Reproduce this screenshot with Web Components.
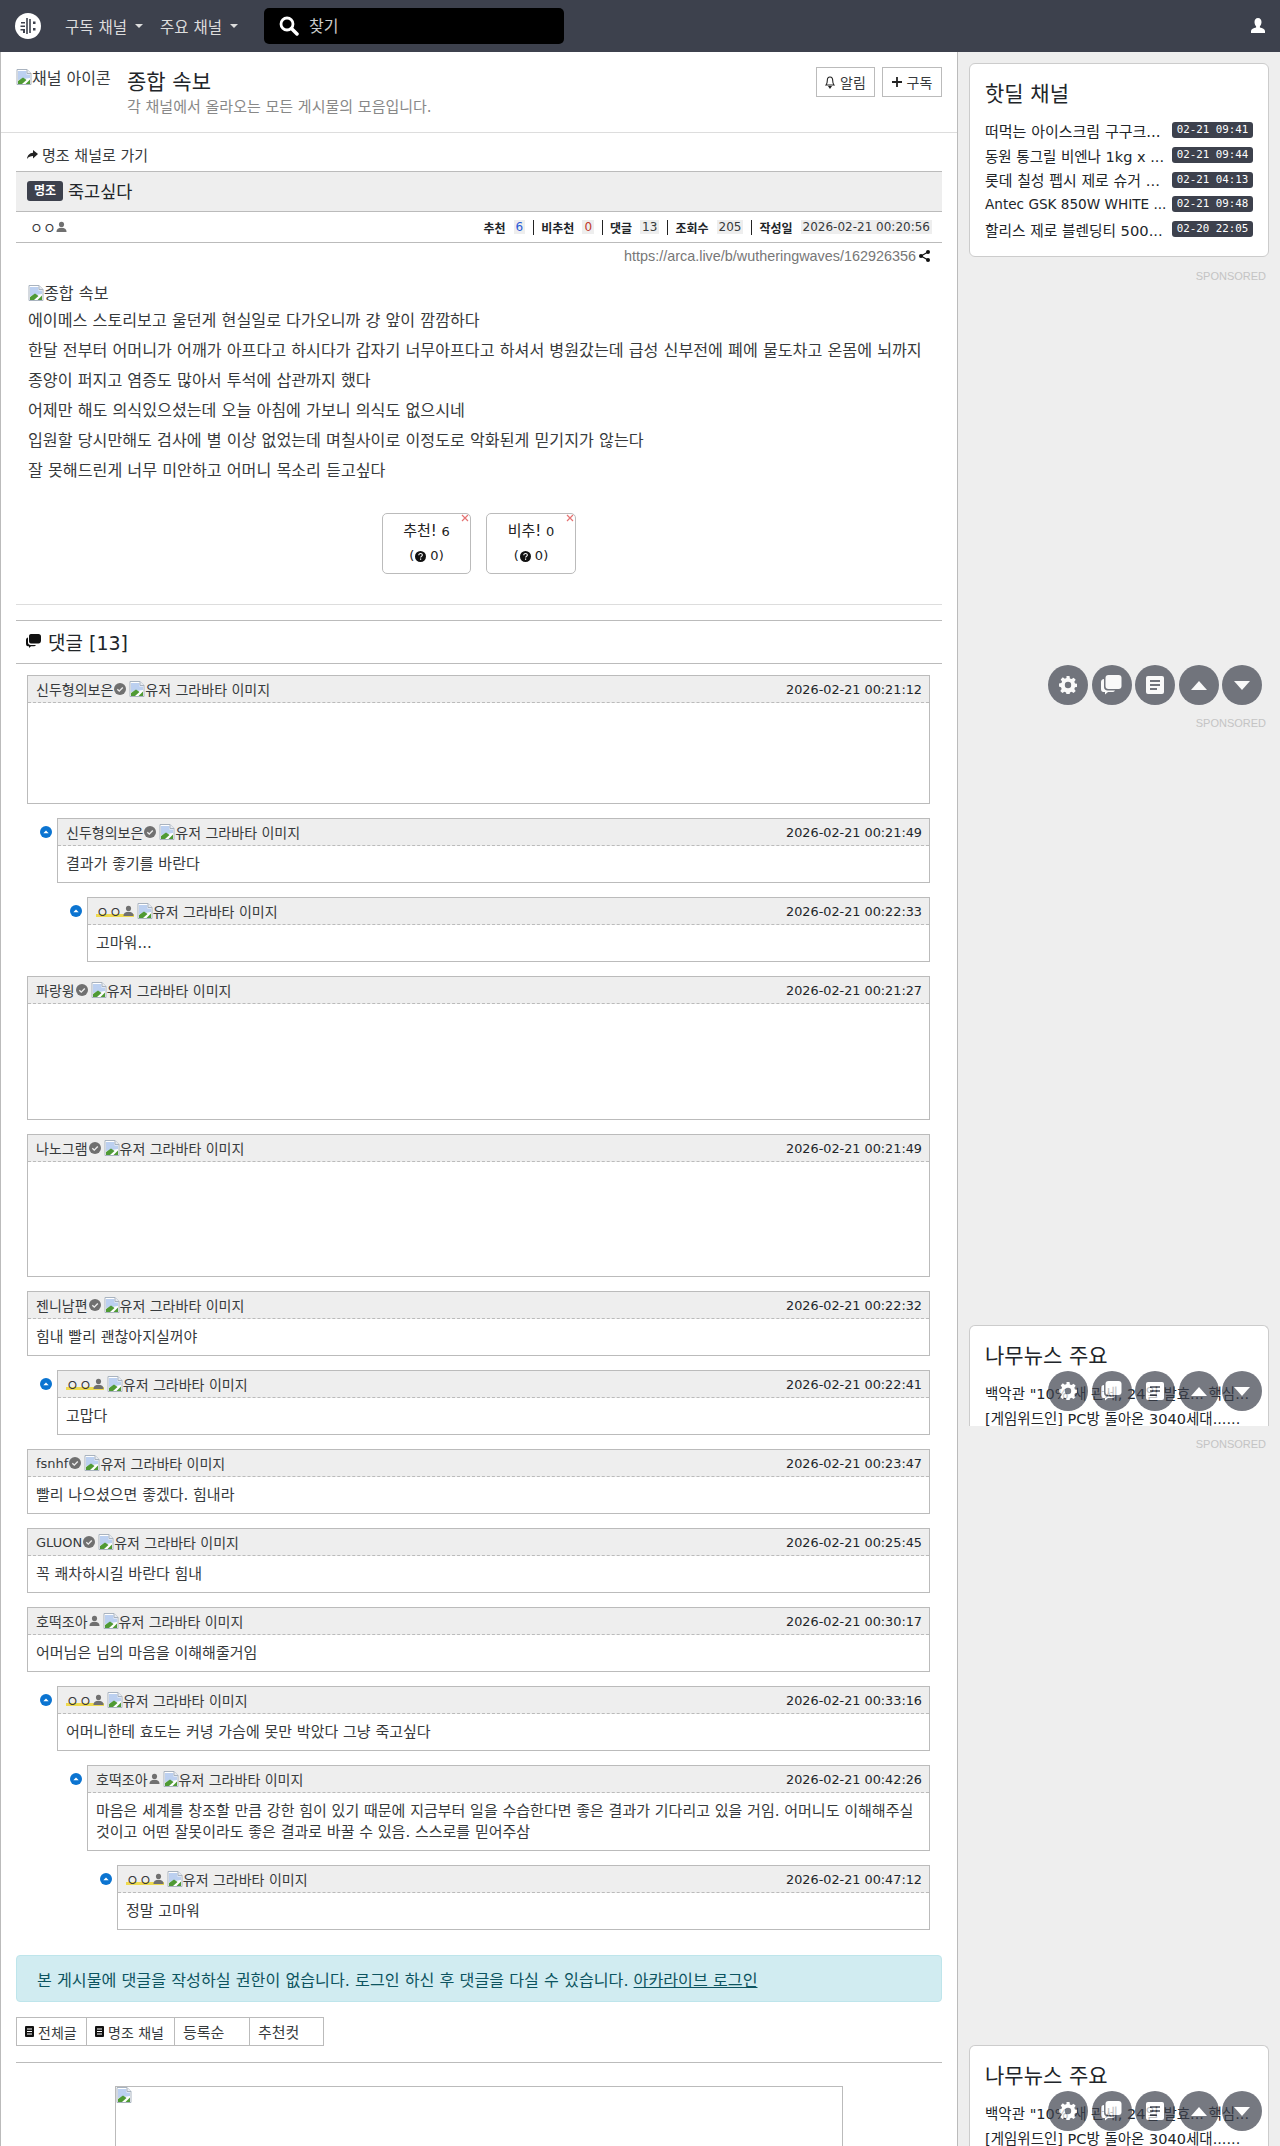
<!DOCTYPE html>
<html lang="ko">
<head>
<meta charset="utf-8">
<title>죽고싶다</title>
<style>
html,body{margin:0;padding:0;background:#eee}
body{font-family:"DejaVu Sans","Noto Sans CJK KR",sans-serif;font-size:14px;color:#373a3c;height:2146px;overflow:hidden}
</style>
</head>
<body>
<arca-navbar></arca-navbar>
<arca-layout>
  <arca-channel-head></arca-channel-head>
  <arca-article></arca-article>
  <arca-comments>
    <arca-comment user="신두형의보은" mark="check" time="2026-02-21 00:21:12" tall="100"></arca-comment>
    <arca-comment user="신두형의보은" mark="check" time="2026-02-21 00:21:49" depth="1">결과가 좋기를 바란다</arca-comment>
    <arca-comment user="ㅇㅇ" mark="user" op time="2026-02-21 00:22:33" depth="2">고마워...</arca-comment>
    <arca-comment user="파랑윙" mark="check" time="2026-02-21 00:21:27" tall="115"></arca-comment>
    <arca-comment user="나노그램" mark="check" time="2026-02-21 00:21:49" tall="114"></arca-comment>
    <arca-comment user="젠니남편" mark="check" time="2026-02-21 00:22:32">힘내 빨리 괜찮아지실꺼야</arca-comment>
    <arca-comment user="ㅇㅇ" mark="user" op time="2026-02-21 00:22:41" depth="1">고맙다</arca-comment>
    <arca-comment user="fsnhf" latin mark="check" time="2026-02-21 00:23:47">빨리 나으셨으면 좋겠다. 힘내라</arca-comment>
    <arca-comment user="GLUON" latin mark="check" time="2026-02-21 00:25:45">꼭 쾌차하시길 바란다 힘내</arca-comment>
    <arca-comment user="호떡조아" mark="user" time="2026-02-21 00:30:17">어머님은 님의 마음을 이해해줄거임</arca-comment>
    <arca-comment user="ㅇㅇ" mark="user" op time="2026-02-21 00:33:16" depth="1">어머니한테 효도는 커녕 가슴에 못만 박았다 그냥 죽고싶다</arca-comment>
    <arca-comment user="호떡조아" mark="user" time="2026-02-21 00:42:26" depth="2">마음은 세계를 창조할 만큼 강한 힘이 있기 때문에 지금부터 일을 수습한다면 좋은 결과가 기다리고 있을 거임. 어머니도 이해해주실 것이고 어떤 잘못이라도 좋은 결과로 바꿀 수 있음. 스스로를 믿어주삼</arca-comment>
    <arca-comment user="ㅇㅇ" mark="user" op time="2026-02-21 00:47:12" depth="3">정말 고마워</arca-comment>
  </arca-comments>
  <arca-footer-bar></arca-footer-bar>
  <arca-sidebar slot="side"></arca-sidebar>
</arca-layout>

<script>
const ICON = {
  broken: `<svg class="broken" width="16" height="16" viewBox="0 0 16 16"><path d="M1 .5h10l4 4v11H1z" fill="#fff" stroke="#a9b3bf"/><path d="M2 2h8.500v3.500H14V9L2 11z" fill="#bcd0f0"/><path d="M11 .5v4h4" fill="#e8ecf1" stroke="#a9b3bf"/><path d="M2 15v-3l5-3.500 3.500 2.500-4.500 4z" fill="#4f9a34"/><path d="M9.500 15l4.500-4.500V15z" fill="#4f9a34"/></svg>`,
  user: `<svg class="mk" width="11" height="12" viewBox="0 0 12 12"><circle cx="6" cy="3.200" r="2.800" fill="#707070"/><path d="M.5 11.500c0-3.200 2.200-4.600 5.500-4.600s5.500 1.400 5.500 4.600z" fill="#707070"/></svg>`,
  check: `<svg class="mk" width="12" height="12" viewBox="0 0 13 13"><circle cx="6.500" cy="6.500" r="6.500" fill="#707070"/><path d="M3.600 6.700l2.100 2.100 3.800-4" fill="none" stroke="#eee" stroke-width="1.500"/></svg>`
}

// navbar
class ArcaNavbar extends HTMLElement{
  constructor(){
    super()
    this.attachShadow({mode:'open'}).innerHTML = `
    <style>
    :host{display:flex;align-items:center;height:52px;background:#3d414d;color:#ddd;font-size:15.500px;padding:0 14px 0 15px;box-sizing:border-box}
    .logo{width:26px;height:26px;flex:none;margin-right:24px;display:block}
    .menu{display:flex;align-items:center;margin-right:17px;padding-bottom:1px}
    .menu i{display:block;width:0;height:0;margin-left:8px;border:4px solid transparent;border-top-color:#ddd;border-bottom:0}
    .search{display:flex;align-items:center;gap:10px;margin-left:9px;width:300px;height:36px;background:#000;border-radius:5px;padding-left:15px;box-sizing:border-box;color:#ccc;font-size:16px}
    .search span{margin-top:-2px}
    .me{margin-left:auto;display:block}
    </style>
    <svg class="logo" viewBox="0 0 26 26"><circle cx="13" cy="13" r="13" fill="#fff"/><path d="M12 5v16M15 6v14" stroke="#3d414d" stroke-width="1.600"/><path d="M6 9h4v1.600H6zM5.500 12.500h4.500v1.600H5.500zM5.500 16h4.500v4H8v-2.400H5.500zM18 8.500h2.500V11H18zM18 15h2.500v2.500H18z" fill="#3d414d"/></svg>
    <div class="menu">구독 채널<i></i></div>
    <div class="menu">주요 채널<i></i></div>
    <div class="search">
      <svg width="20" height="20" viewBox="0 0 20 20"><circle cx="8" cy="8" r="6" fill="none" stroke="#fff" stroke-width="2.800"/><path d="M12.500 12.500l5.500 5.500" stroke="#fff" stroke-width="3.500" stroke-linecap="round"/></svg>
      <span>찾기</span>
    </div>
    <svg class="me" width="16" height="16" viewBox="0 0 16 16"><path d="M8 0c2.300 0 3.500 1.700 3.500 4 0 1.800-.7 3.300-1.600 4.200v1.300c2.500.7 5.100 1.600 5.100 3.500V15H1v-2c0-1.900 2.600-2.800 5.100-3.500V8.200C5.200 7.300 4.500 5.800 4.500 4 4.500 1.700 5.700 0 8 0z" fill="#fff"/></svg>`
  }
}
customElements.define('arca-navbar',ArcaNavbar)

// two column page
class ArcaLayout extends HTMLElement{
  constructor(){
    super()
    this.attachShadow({mode:'open'}).innerHTML = `
    <style>
    :host{display:flex;align-items:stretch;height:2094px;overflow:hidden}
    main{width:958px;flex:none;box-sizing:border-box;background:#fff;border-left:1px solid #bbb;border-right:1px solid #bbb;height:2094px;overflow:hidden}
    aside{flex:1;min-width:0}
    </style>
    <main><slot></slot></main>
    <aside><slot name="side"></slot></aside>`
  }
}
customElements.define('arca-layout',ArcaLayout)

class ArcaChannelHead extends HTMLElement{
  constructor(){
    super()
    this.attachShadow({mode:'open'}).innerHTML = `
    <style>
    :host{display:flex;height:81px;box-sizing:border-box;border-bottom:1px solid #ddd;padding:15px 15px 0 15px}
    .ico{width:95px;height:22px;margin-top:2px;overflow:hidden;white-space:nowrap;display:flex;align-items:flex-start;color:#373a3c;font-size:16px;flex:none;margin-right:16px}
    .ico .broken{flex:none}
    .ico span{line-height:20px}
    h1{font-size:21px;font-weight:400;color:#212529;margin:0;line-height:30px}
    p{margin:0;font-size:15px;color:#888;line-height:20px}
    .btns{margin-left:auto;display:flex;gap:7px}
    .btn{display:flex;align-items:center;justify-content:center;gap:5px;height:30px;box-sizing:border-box;border:1px solid #bbb;font-size:14px;color:#373a3c}
    </style>
    <div class="ico">${ICON.broken}<span>채널 아이콘</span></div>
    <div><h1>종합 속보</h1><p>각 채널에서 올라오는 모든 게시물의 모음입니다.</p></div>
    <div class="btns">
      <div class="btn" style="width:59px"><svg width="10" height="13" viewBox="0 0 10 13"><path d="M5 1C3 1 2.300 2.500 2.300 4.500c0 2.500-.6 3.700-1.300 4.500h8c-.7-.8-1.300-2-1.300-4.500C7.700 2.500 7 1 5 1zM4 10.500h2L5 12z" fill="none" stroke="#222" stroke-width="1.100"/></svg>알림</div>
      <div class="btn" style="width:60px"><svg width="10" height="10" viewBox="0 0 10 10"><path d="M5 0v10M0 5h10" stroke="#222" stroke-width="1.800"/></svg>구독</div>
    </div>`
  }
}
customElements.define('arca-channel-head',ArcaChannelHead)

class ArcaArticle extends HTMLElement{
  constructor(){
    super()
    this.attachShadow({mode:'open'}).innerHTML = `
    <style>
    :host{display:block;padding:0 15px}
    .back{display:flex;align-items:center;gap:4px;height:38px;padding:5px 0 0 11px;box-sizing:border-box;font-size:15px;color:#373a3c}
    .title{display:flex;align-items:center;gap:5px;height:41px;box-sizing:border-box;background:#eee;border-top:1px solid #bbb;border-bottom:1px solid #bbb;padding:0 0 2px 11px;font-size:17.500px;color:#212529}
    .badge{background:#3d414d;color:#fff;font-size:12px;font-weight:700;border-radius:3px;padding:0 6px;height:20px;line-height:20px;width:24px;text-align:center}
    .meta{display:flex;align-items:center;height:31px;box-sizing:border-box;border-bottom:1px solid #bbb;padding:0 10px 0 14px;font-size:12px;color:#373a3c}
    .nick{display:flex;align-items:center;font-size:14px}
    .stats{margin-left:auto;display:flex;align-items:center}
    .stats b{font-weight:700;color:#212529;margin-right:8px}
    .stats span{background:#eee;padding:0 2px}
    .stats i{display:block;width:1px;height:15px;background:#222;margin:0 7.500px}
    .up{color:#2a5bd7}.down{color:#c0392b}
    .url{display:flex;align-items:center;justify-content:flex-end;gap:3px;height:26px;padding-right:12px;font-family:"Liberation Sans",sans-serif;font-size:14.400px;color:#777}
    .body{padding:9px 12px 0;font-size:16.150px;color:#373a3c;line-height:21px}
    .alt{display:flex;align-items:center;height:22px;margin:4px 0 6px}
    .body p{margin:0 0 9px}
    .votes{display:flex;justify-content:center;gap:15px;padding-top:23px}
    .vote{position:relative;box-sizing:border-box;height:61px;border:1px solid #bbb;border-radius:5px;text-align:center;color:#222;padding-top:6px}
    .vote .t{font-size:15px;line-height:22px}
    .vote .t small{font-size:13px}
    .vote .s{display:flex;align-items:center;justify-content:center;font-size:13px;line-height:18px;margin-top:4px}
    .vote .s svg{margin:0 4px 0 1px}
    .vote svg.x{position:absolute;top:0;right:1px}
    .rule{border-top:1px solid #ddd;margin-top:30px}
    </style>
    <div class="back"><svg width="11" height="9" viewBox="0 0 11 9"><path d="M6 0l5 4-5 4.500V6C3.500 6 1.500 6.800 0 9c.3-3.500 2.500-6 6-6.300z" fill="#222"/></svg>명조 채널로 가기</div>
    <div class="title"><span class="badge">명조</span><span>죽고싶다</span></div>
    <div class="meta">
      <div class="nick"><span>ㅇㅇ</span>${ICON.user}</div>
      <div class="stats">
        <b>추천</b><span class="up">6</span><i></i>
        <b>비추천</b><span class="down">0</span><i></i>
        <b>댓글</b><span>13</span><i></i>
        <b>조회수</b><span>205</span><i></i>
        <b>작성일</b><span>2026-02-21 00:20:56</span>
      </div>
    </div>
    <div class="url">https://arca.live/b/wutheringwaves/162926356
      <svg width="11" height="12" viewBox="0 0 11 12"><circle cx="2" cy="6" r="2" fill="#111"/><circle cx="9" cy="2" r="2" fill="#111"/><circle cx="9" cy="10" r="2" fill="#111"/><path d="M2 6l7-4M2 6l7 4" stroke="#111" stroke-width="1.200"/></svg></div>
    <div class="body">
      <div class="alt">${ICON.broken}<span>종합 속보</span></div>
      <p>에이메스 스토리보고 울던게 현실일로 다가오니까 걍 앞이 깜깜하다</p>
      <p>한달 전부터 어머니가 어깨가 아프다고 하시다가 갑자기 너무아프다고 하셔서 병원갔는데 급성 신부전에 폐에 물도차고 온몸에 뇌까지</p>
      <p>종양이 퍼지고 염증도 많아서 투석에 삽관까지 했다</p>
      <p>어제만 해도 의식있으셨는데 오늘 아침에 가보니 의식도 없으시네</p>
      <p>입원할 당시만해도 검사에 별 이상 없었는데 며칠사이로 이정도로 악화된게 믿기지가 않는다</p>
      <p>잘 못해드린게 너무 미안하고 어머니 목소리 듣고싶다</p>
      <div class="votes">
        ${['추천!|6|89','비추!|0|90'].map(v=>{const [a,b,w]=v.split('|');return `<div class="vote" style="width:${w}px">
          <svg class="x" width="8" height="8" viewBox="0 0 8 8"><path d="M1 1l6 6M7 1l-6 6" stroke="#e57373" stroke-width="1.200"/></svg>
          <div class="t">${a} <small>${b}</small></div>
          <div class="s">(<svg width="11" height="11" viewBox="0 0 11 11"><circle cx="5.500" cy="5.500" r="5.500" fill="#111"/><path d="M3.800 4.200c0-2.300 3.600-2.200 3.500 0 0 1.200-1.700 1.200-1.700 2.400" fill="none" stroke="#fff" stroke-width="1.100"/><rect x="5" y="7.500" width="1.200" height="1.300" fill="#fff"/></svg>0)</div>
        </div>`}).join('')}
      </div>
    </div>
    <div class="rule"></div>`
  }
}
customElements.define('arca-article',ArcaArticle)

class ArcaComments extends HTMLElement{
  constructor(){
    super()
    this.attachShadow({mode:'open'}).innerHTML = `
    <style>
    :host{display:block;padding:15px 15px 0}
    .head{display:flex;align-items:center;gap:7px;height:44px;box-sizing:border-box;border-top:1px solid #bbb;border-bottom:1px solid #bbb;padding:0 0 2px 10px;font-size:19px;color:#212529}
    .list{display:flex;flex-direction:column;gap:14px;padding:11px 12px 0 11px}
    </style>
    <div class="head"><svg width="15" height="14" viewBox="0 0 15 14"><path d="M5 0h7.500C14 0 15 1 15 2.500v4C15 8.500 14 9.500 12.500 9.500H5C3.500 9.500 3 8.500 3 7V2.500C3 1 3.500 0 5 0z" fill="#111"/><path d="M2 3.500v5c0 1.500 1 2.500 2.500 2.500H10c-.5 1-1.500 1.300-2.500 1.300H5L3 14v-1.700H2C.5 12.300 0 11 0 9.500V6c0-1.500 1-2.500 2-2.500z" fill="#111"/></svg><span>댓글 [13]</span></div>
    <div class="list"><slot></slot></div>`
  }
}
customElements.define('arca-comments',ArcaComments)

class ArcaComment extends HTMLElement{
  constructor(){
    super()
    const depth = +(this.getAttribute('depth')||0)
    const tall = this.getAttribute('tall')
    const op = this.hasAttribute('op')
    const latin = this.hasAttribute('latin')
    const mark = ICON[this.getAttribute('mark')]
    this.attachShadow({mode:'open'}).innerHTML = `
    <style>
    :host{display:block;position:relative;margin-left:${depth*30}px}
    .box{border:1px solid #bbb;background:#fff}
    .top{display:flex;align-items:center;height:27px;box-sizing:border-box;background:#eee;border-bottom:1px dashed #bbb;padding:0 7px 0 8px;font-size:14px;color:#373a3c}
    .user{display:flex;align-items:center;gap:1px;height:26px}
    .user.op{background:linear-gradient(#eeda4f,#eeda4f) 0 16px/100% 3px no-repeat}
    .user.latin{font-size:13px}
    .ava{display:flex;align-items:center;margin-left:3px}
    .time{margin-left:auto;color:#212529;font-size:12.800px}
    .txt{font-size:15px;line-height:21px;color:#373a3c;padding:8px 8px 7px;min-height:21px}
    .tog{position:absolute;left:-17px;top:8px}
    </style>
    ${depth?`<svg class="tog" width="12" height="12" viewBox="0 0 12 12"><circle cx="6" cy="6" r="6" fill="#0b74d1"/><path d="M3.300 7.200L6 4.500l2.700 2.700z" fill="#fff"/></svg>`:''}
    <div class="box">
      <div class="top">
        <div class="user ${op?'op':''} ${latin?'latin':''}"><span>${this.getAttribute('user')}</span>${mark}</div>
        <div class="ava">${ICON.broken}<span>유저 그라바타 이미지</span></div>
        <div class="time">${this.getAttribute('time')}</div>
      </div>
      <div class="txt" ${tall?`style="height:${tall-15}px"`:''}><slot></slot></div>
    </div>`
  }
}
customElements.define('arca-comment',ArcaComment)

class ArcaFooterBar extends HTMLElement{
  constructor(){
    super()
    const doc = `<svg width="9" height="11" viewBox="0 0 9 11"><rect width="9" height="11" rx="1" fill="#111"/><path d="M2 3h5M2 5.500h5M2 8h5" stroke="#fff"/></svg>`
    this.attachShadow({mode:'open'}).innerHTML = `
    <style>
    :host{display:block;padding:25px 15px 0}
    .alert{height:47px;box-sizing:border-box;background:#d1ecf1;border:1px solid #bee5eb;border-radius:4px;color:#0c5460;font-size:16.150px;padding:0 20px;display:flex;align-items:center}
    .alert u{margin-left:5px}
    .tabs{display:flex;margin-top:15px}
    .tab{display:flex;align-items:center;gap:4px;height:29px;box-sizing:border-box;border:1px solid #bbb;margin-right:-1px;padding-left:8px;font-size:15px;color:#373a3c}
    .tab.i{font-size:14px}
    .rule{border-top:1px solid #bbb;margin-top:16px}
    .ad{box-sizing:border-box;width:728px;height:90px;margin:23px 0 0 99px;border:1px solid #bbb;border-bottom:0}
    .ad svg{display:block}
    </style>
    <div class="alert">본 게시물에 댓글을 작성하실 권한이 없습니다. 로그인 하신 후 댓글을 다실 수 있습니다. <u>아카라이브 로그인</u></div>
    <div class="tabs">
      <div class="tab i" style="width:71px">${doc}전체글</div>
      <div class="tab i" style="width:89px">${doc}명조 채널</div>
      <div class="tab" style="width:76px">등록순</div>
      <div class="tab" style="width:75px">추천컷</div>
    </div>
    <div class="rule"></div>
    <div class="ad">${ICON.broken}</div>`
  }
}
customElements.define('arca-footer-bar',ArcaFooterBar)

class ArcaCard extends HTMLElement{
  constructor(){
    super()
    this.attachShadow({mode:'open'}).innerHTML = `
    <style>
    :host{display:block;box-sizing:border-box;background:#fff;border:1px solid #ccc;border-radius:6px;padding:15px 15px 0;overflow:hidden}
    h3{font-size:21px;font-weight:400;color:#212529;margin:0 0 9px;line-height:30px}
    </style>
    <h3>${this.getAttribute('heading')}</h3>
    <slot></slot>`
  }
}
customElements.define('arca-card',ArcaCard)

class ArcaRow extends HTMLElement{
  constructor(){
    super()
    const badge = this.getAttribute('date')
    this.attachShadow({mode:'open'}).innerHTML = `
    <style>
    :host{display:flex;align-items:center;justify-content:space-between;height:24.700px;font-size:14.500px;color:#212529;white-space:nowrap}
    .d{flex:none;width:81px;height:16px;line-height:16px;background:#3d414d;color:#fff;border-radius:3px;text-align:center;font-family:"DejaVu Sans Mono","Liberation Mono",monospace;font-size:10.800px}
    </style>
    <div class="t"><slot></slot></div>${badge?`<div class="d">${badge}</div>`:''}`
  }
}
customElements.define('arca-row',ArcaRow)

// floating round buttons, they sit over whatever is below
class ArcaFloat extends HTMLElement{
  constructor(){
    super()
    this.attachShadow({mode:'open'}).innerHTML = `
    <style>
    :host{display:flex;gap:3.500px;position:absolute;left:90px;top:${this.getAttribute('top')}px;z-index:2}
    .b{width:40px;height:40px;border-radius:50%;background:#3d414d;opacity:.7;display:flex;align-items:center;justify-content:center}
    </style>
    <div class="b"><svg width="18" height="18" viewBox="0 0 18 18"><path d="M7.500 0h3l.4 2.400 1.700.7 2-1.400 2.100 2.100-1.400 2 .7 1.700 2.400.4v3l-2.400.4-.7 1.700 1.400 2-2.100 2.100-2-1.400-1.700.7-.4 2.400h-3l-.4-2.400-1.700-.7-2 1.400-2.100-2.100 1.400-2-.7-1.700L0 10.500v-3l2.400-.4.7-1.700-1.400-2 2.100-2.100 2 1.400 1.700-.7z" fill="#fff"/><circle cx="9" cy="9" r="3.200" fill="#3d414d"/></svg></div>
    <div class="b"><svg width="21" height="20" viewBox="0 0 21 20"><rect x="4.500" y="0" width="16" height="14" rx="3" fill="#fff"/><path d="M3 4v8c0 2 1.500 3.500 3.500 3.500H14c-.7 1-1.500 1.500-3 1.500H7l-3 2.500V17H2.500C1 17 0 16 0 14v-7c0-2 1.500-3 3-3z" fill="#fff"/></svg></div>
    <div class="b"><svg width="18" height="18" viewBox="0 0 18 18"><rect width="18" height="18" rx="2" fill="#fff"/><path d="M4 5h10M4 9h10M4 13h7" stroke="#3d414d" stroke-width="1.800"/></svg></div>
    <div class="b"><svg width="16" height="9" viewBox="0 0 16 9"><path d="M8 0l8 9H0z" fill="#fff"/></svg></div>
    <div class="b"><svg width="16" height="9" viewBox="0 0 16 9"><path d="M0 0h16L8 9z" fill="#fff"/></svg></div>`
  }
}
customElements.define('arca-float',ArcaFloat)

class ArcaSponsor extends HTMLElement{
  constructor(){
    super()
    this.attachShadow({mode:'open'}).innerHTML = `
    <style>:host{display:block;text-align:right;font:11px/14px "Liberation Sans",sans-serif;color:#c4c4c4;padding-right:3px;margin-top:${this.getAttribute('mt')||0}px}</style>SPONSORED`
  }
}
customElements.define('arca-sponsor',ArcaSponsor)

class ArcaSidebar extends HTMLElement{
  constructor(){
    super()
    const news = `<arca-row>백악관 "10% 새 관세, 24일 발효... 핵심...</arca-row><arca-row>[게임위드인] PC방 돌아온 3040세대......</arca-row>`
    this.attachShadow({mode:'open'}).innerHTML = `
    <style>
    :host{display:block;position:relative;padding:11px 11px 0;height:2094px;box-sizing:border-box}
    .side{display:flex;flex-direction:column}
    </style>
    <div class="side">
      <arca-card heading="핫딜 채널" style="height:194px">
        <arca-row style="font-size:15px" date="02-21 09:41">떠먹는 아이스크림 구구크...</arca-row>
        <arca-row date="02-21 09:44">동원 통그릴 비엔나 1kg x ...</arca-row>
        <arca-row style="font-size:14.900px" date="02-21 04:13">롯데 칠성 펩시 제로 슈거 ...</arca-row>
        <arca-row style="font-size:13.600px" date="02-21 09:48">Antec GSK 850W WHITE ...</arca-row>
        <arca-row style="font-size:14.700px" date="02-20 22:05">할리스 제로 블렌딩티 500...</arca-row>
      </arca-card>
      <arca-sponsor mt="12"></arca-sponsor>
      <arca-sponsor mt="433"></arca-sponsor>
      <arca-card heading="나무뉴스 주요" style="height:101px;margin-top:595px;border-bottom:0;border-radius:6px 6px 0 0">${news}</arca-card>
      <arca-sponsor mt="11"></arca-sponsor>
      <arca-card heading="나무뉴스 주요" style="height:120px;margin-top:594px;border-bottom:0;border-radius:6px 6px 0 0">${news}</arca-card>
    </div>
    <arca-float top="613"></arca-float>
    <arca-float top="1319"></arca-float>
    <arca-float top="2039"></arca-float>`
  }
}
customElements.define('arca-sidebar',ArcaSidebar)
</script>
</body>
</html>
